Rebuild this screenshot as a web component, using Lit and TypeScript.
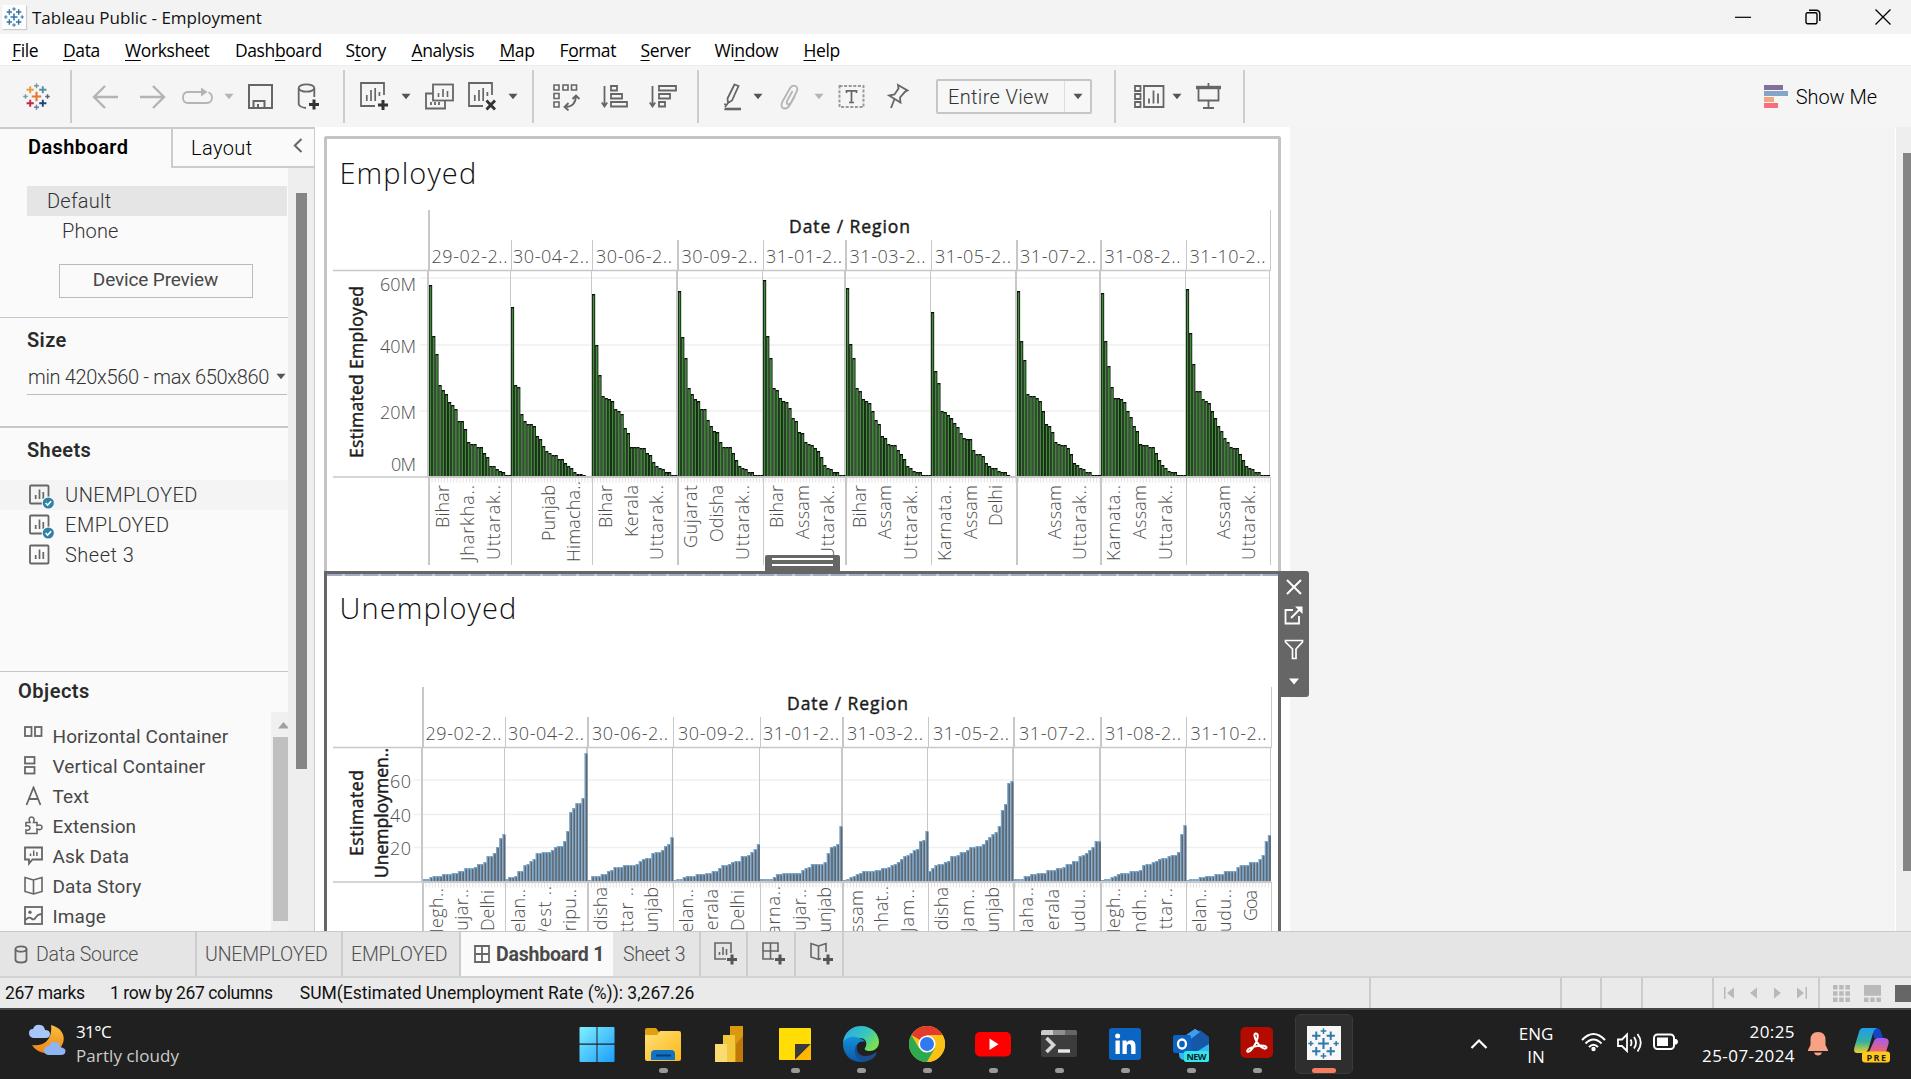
import { LitElement, html, svg, css, nothing } from "lit";
import { customElement, property } from "lit/decorators.js";

/* ---------- small drawing helpers ---------- */

const plus = (x: number, y: number, r: number, c: string, w = 1.6) =>
  svg`<path d="M${x - r} ${y}H${x + r}M${x} ${y - r}V${y + r}" stroke=${c} stroke-width=${w} fill="none"/>`;

const BRAND = ["#e8762c", "#eb9c3c", "#5b8fa0", "#c7234b", "#1f457e", "#7099a6", "#6b7aa8", "#7099a6", "#59617f"];
const BLUE = Array(9).fill("#2f78a8");

const tableauMark = (size: number, c: string[], w = 1.7) => html`
  <svg width=${size} height=${size} viewBox="-12 -12 24 24">
    ${plus(0, 0, 4.2, c[0], w * 1.1)}
    ${plus(-5.6, -6, 3.2, c[1], w)}${plus(5.6, -6, 3.2, c[2], w)}
    ${plus(-5.6, 6, 3.2, c[3], w)}${plus(5.6, 6, 3.2, c[4], w)}
    ${plus(0, -9.6, 2.2, c[5], w * 0.75)}${plus(0, 9.6, 2.2, c[6], w * 0.75)}
    ${plus(-9.8, 0, 2, c[7], w * 0.75)}${plus(9.8, 0, 2, c[8], w * 0.75)}
  </svg>`;

const ico = (w: number, h: number, body: unknown, cls = "") => html`
  <svg class=${cls} width=${w} height=${h} viewBox="0 0 ${w} ${h}" fill="none" stroke="#666" stroke-width="1.8">${body}</svg>`;

const caret = (cls = "", c = "#555") => html`
  <svg class=${cls} width="10" height="7" viewBox="0 0 10 7"><path d="M0.5 0.8H9.5L5 6.2Z" fill=${c}/></svg>`;

const boldPlus = (x: number, y: number) => svg`<path d="M${x - 5} ${y}h10M${x} ${y - 5}v10" stroke="#333" stroke-width="3"/>`;

/* ---------- chart ---------- */

interface Pane { label: string; lx: number; x: number; thick?: boolean; slots: number; tops: string; regions: [string, number, number, number][]; }
interface ChartSpec {
  view: [number, number, number, number]; origin: number; headTop: number; headMid: number; plotTop: number; base: number;
  barBase: number; bottom: number; title: number; titleY: number; dateY: number; left: number; right: number;
  axis: [string, number, number, number][]; grid: number[]; axisTitle: [string, number, number, number][];
  kind: "green" | "blue"; panes: Pane[];
}

const U: [string, number] = ["Uttarak..", 75];
const employed: ChartSpec = {
  view: [327, 207, 951, 364], origin: 125, headTop: 210, headMid: 240, plotTop: 270.5, base: 477, barBase: 476, bottom: 565,
  title: 789, titleY: 232.5, dateY: 263, left: 429, right: 1270.5,
  axis: [["60M", 380, 290.5, 36], ["40M", 380, 352.5, 36], ["20M", 380, 418.5, 36], ["0M", 391, 470.5, 25]],
  grid: [278, 345, 411], axisTitle: [["Estimated Employed", 363, 458, 172]], kind: "green",
  panes: [
    { label: "29-02-2..", lx: 431.5, x: 429, thick: true, slots: 26, tops: "480 633 687 781 795 808 831 840 853 889 889 912 952 958 958 966 966 984 997 1024 1024 1033 1038 1042 1050 1050", regions: [["Bihar", 449, 485, 43], ["Jharkha..", 474, 485, 76], [U[0], 500, 485, U[1]]] },
    { label: "30-04-2..", lx: 513, x: 511.5, slots: 26, tops: "547 781 786 867 889 898 898 903 934 943 962 979 984 989 989 1001 1001 1015 1024 1029 1042 1047 1047 1050", regions: [["Punjab", 555, 485, 56], ["Himacha..", 580, 481, 81]] },
    { label: "30-06-2..", lx: 596, x: 592.5, slots: 27, tops: "507 660 750 813 818 822 827 853 858 867 908 925 966 966 966 970 970 984 989 1011 1024 1029 1033 1042 1042 1050 1050", regions: [["Bihar", 612, 485, 43], ["Kerala", 638, 485, 52], [U[0], 663, 485, U[1]]] },
    { label: "30-09-2..", lx: 681.5, x: 678, thick: true, slots: 27, tops: "498 637 700 790 808 822 827 853 853 885 903 917 921 952 966 966 966 984 1006 1024 1029 1033 1042 1042 1050 1050 1050", regions: [["Gujarat", 697, 485, 63], ["Odisha", 723, 485, 57], [U[0], 749, 485, U[1]]] },
    { label: "31-01-2..", lx: 766, x: 763.5, slots: 26, tops: "466 633 700 790 795 818 827 831 849 880 889 921 925 952 957 961 970 979 997 1020 1029 1033 1042 1042 1050 1050", regions: [["Bihar", 783, 485, 43], ["Assam", 809, 485, 54], [U[0], 834, 485, U[1]]] },
    { label: "31-03-2..", lx: 849.5, x: 846, thick: true, slots: 27, tops: "489 656 700 790 799 822 827 835 858 885 898 934 939 957 961 961 975 988 1002 1024 1029 1038 1042 1042 1050 1050 1050", regions: [["Bihar", 866, 485, 43], ["Assam", 891, 485, 54], [U[0], 917, 485, U[1]]] },
    { label: "31-05-2..", lx: 935, x: 931.5, slots: 27, tops: "561 737 773 858 862 871 880 894 907 925 939 943 943 975 988 988 993 1015 1024 1029 1029 1038 1042 1042 1050", regions: [["Karnata..", 951, 485, 76], ["Assam", 977, 485, 54], ["Delhi", 1002, 485, 41]] },
    { label: "31-07-2..", lx: 1020, x: 1017, thick: true, slots: 27, tops: "498 647 705 808 813 813 818 827 858 898 903 921 952 957 961 961 970 988 1015 1020 1029 1033 1042 1042 1050 1050 1050", regions: [["Assam", 1061, 485, 54], [U[0], 1086, 485, U[1]]] },
    { label: "31-08-2..", lx: 1104.5, x: 1101, thick: true, slots: 27, tops: "503 647 723 786 818 818 822 831 858 876 903 917 957 961 961 966 966 984 1006 1020 1029 1038 1042 1042 1050 1050 1050", regions: [["Karnata..", 1120, 485, 76], ["Assam", 1146, 485, 54], [U[0], 1172, 485, U[1]]] },
    { label: "31-10-2..", lx: 1189.5, x: 1186.5, slots: 27, tops: "493 624 718 799 799 822 827 835 858 880 903 917 939 952 966 970 970 988 1006 1024 1029 1033 1042 1042 1050 1050 1050", regions: [["Assam", 1230, 485, 54], [U[0], 1255, 485, U[1]]] },
  ],
};

const unemployed: ChartSpec = {
  view: [327, 642, 951, 289], origin: 560, headTop: 687, headMid: 717, plotTop: 747.5, base: 882, barBase: 881, bottom: 935,
  title: 787, titleY: 709.5, dateY: 740, left: 423, right: 1271.5,
  axis: [["60", 390, 787.5, 21], ["40", 390, 821.5, 21], ["20", 390, 854.5, 21]],
  grid: [780, 814.5, 847.5], axisTitle: [["Estimated", 363, 856, 86], ["Unemploymen..", 388, 878, 130]], kind: "blue",
  panes: [
    { label: "29-02-2..", lx: 425.5, x: 423, thick: true, slots: 26, tops: "956 956 952 947 947 947 943 943 943 938 938 934 934 925 925 925 921 912 912 907 889 889 880 862 835 822", regions: [["Megh..", 443, 888, 56], ["Gujar..", 468, 889, 55], ["Delhi", 494, 890, 41]] },
    { label: "30-04-2..", lx: 508, x: 505.5, slots: 27, tops: "956 952 952 948 934 934 916 911 903 898 880 880 876 876 876 871 862 858 858 844 813 755 745 728 728 714 578", regions: [["Telan..", 525, 889, 53], ["West ..", 551, 886, 58], ["Tripu..", 576, 889, 52]] },
    { label: "30-06-2..", lx: 592, x: 588, thick: true, slots: 27, tops: "960 947 947 947 943 943 934 929 920 920 920 916 916 916 916 911 903 898 894 894 880 876 876 871 858 853 830", regions: [["Odisha", 607, 887, 57], ["Uttar ..", 633, 887, 60], ["Punjab", 658, 887, 56]] },
    { label: "30-09-2..", lx: 678, x: 673.5, slots: 27, tops: "960 956 956 952 947 947 947 943 943 943 938 938 934 934 925 916 916 911 907 903 903 889 889 884 876 867 853", regions: [["Telan..", 693, 889, 53], ["Kerala", 718, 889, 52], ["Delhi", 744, 890, 41]] },
    { label: "31-01-2..", lx: 763, x: 760.5, slots: 26, tops: "956 956 956 956 952 943 943 938 938 938 938 938 938 929 925 920 912 912 912 912 907 880 862 858 853 799", regions: [["Karna..", 780, 886, 60], ["Gujar..", 806, 889, 55], ["Punjab", 831, 887, 56]] },
    { label: "31-03-2..", lx: 847, x: 843, thick: true, slots: 27, tops: "960 956 950 947 943 938 934 934 934 934 929 929 925 925 920 916 911 907 898 889 884 880 871 867 844 840 812", regions: [["Assam", 863, 890, 54], ["Chhat..", 888, 886, 59], ["Jam..", 914, 889, 43]] },
    { label: "31-05-2..", lx: 933, x: 928.5, slots: 27, tops: "934 925 916 911 911 907 903 889 889 884 876 876 871 862 862 858 858 853 840 830 821 817 799 749 731 668 664", regions: [["Odisha", 948, 887, 57], ["Jam..", 974, 889, 43], ["Punjab", 999, 887, 56]] },
    { label: "31-07-2..", lx: 1019, x: 1014, thick: true, slots: 27, tops: "956 956 956 947 947 943 943 938 938 938 929 929 929 925 925 920 911 911 903 903 889 884 880 871 862 844 844", regions: [["Maha..", 1033, 887, 57], ["Kerala", 1059, 889, 52], ["Pudu..", 1085, 889, 54]] },
    { label: "31-08-2..", lx: 1105, x: 1101, thick: true, slots: 27, tops: "960 956 956 952 947 943 938 938 938 934 934 934 929 916 912 911 907 903 898 894 894 889 885 885 876 821 795", regions: [["Megh..", 1120, 888, 56], ["Andh..", 1146, 889, 55], ["Uttar..", 1172, 888, 55]] },
    { label: "31-10-2..", lx: 1190.5, x: 1186.5, slots: 27, tops: "960 956 956 956 952 952 947 947 947 943 943 943 934 934 934 934 920 916 916 916 907 907 907 898 885 844 825", regions: [["Telan..", 1206, 889, 53], ["Pudu..", 1231, 889, 54], ["Goa", 1257, 890, 31]] },
  ],
};

@customElement("sheet-chart")
class SheetChart extends LitElement {
  @property({ attribute: false }) spec!: ChartSpec;
  static styles = css`
    :host { display: block; }
    svg { display: block; }
    text { font-family: "Open Sans", "Noto Sans", sans-serif; font-size: 18px; font-weight: 300; fill: #4c4c4c; }
    .strong { font-weight: 400; fill: #1c1c1c; stroke: #1c1c1c; stroke-width: 0.45px; font-size: 17.5px; }
    .rule { stroke: #c8c8c8; fill: none; }
    .grid { stroke: #efefef; stroke-width: 1.5; }
  `;
  private pane(p: Pane, next: number) {
    const s = this.spec;
    const x0 = Math.round(p.x - 0.5), pitch = (next - p.x) / p.slots;
    const green = s.kind === "green";
    return p.tops.split(" ").map((t, i) => {
      const y = Math.round(s.origin + Number(t) / 3), a = x0 + i * pitch, h = s.barBase - y;
      return green
        ? svg`<rect x=${a} y=${y} width=${pitch} height=${h} fill="#080c08"/>
              ${h > 2 ? svg`<rect x=${a + 0.7} y=${y + 1.3} width=${pitch - 1.45} height=${h - 1.3} fill="#438a3c"/>` : nothing}`
        : svg`<rect x=${a} y=${y} width=${pitch} height=${h} fill="#76a3ca"/>
              ${h > 2 ? svg`<rect x=${a + 1.35} y=${y + 1.2} width=${pitch - 1.5} height=${h - 1.2} fill="#60666c"/>` : nothing}`;
    });
  }
  render() {
    const s = this.spec, [vx, vy, vw, vh] = s.view;
    const edges = [...s.panes.map((p) => p.x), s.right];
    const ticks: number[] = [];
    for (let x = s.left + 3; x < s.right; x += 3.12) ticks.push(x);
    return html`<svg width=${vw} height=${vh} viewBox="${vx} ${vy} ${vw} ${vh}">
      ${s.grid.map((y) => svg`<path class="grid" d="M${s.left - 9} ${y}H${s.right}"/>`)}
      ${ticks.map((x) => svg`<path d="M${x} ${s.base + 1}v4.5" stroke="#e2e2e2" stroke-width="1"/>`)}
      ${edges.map((x, i) => svg`
        <path class="rule" stroke-width=${i < s.panes.length && s.panes[i].thick ? 2 : 1}
          d="M${x} ${i === 0 || i === edges.length - 1 ? s.headTop : s.headMid}V${s.plotTop}M${x - 1} ${s.plotTop}V${s.base}M${x} ${s.base}V${s.bottom}"/>`)}
      ${s.panes.map((p, i) => this.pane(p, edges[i + 1]))}
      <path class="rule" stroke-width="1.3" d="M333 ${s.plotTop}H${s.right}M333 ${s.base}H${s.left}"/>
      <path class="rule" stroke-width="2" d="M${s.left} ${s.base}H${s.right}"/>
      <text class="strong" x=${s.title} y=${s.titleY} textLength="121">Date / Region</text>
      ${s.panes.map((p) => svg`<text x=${p.lx} y=${s.dateY} textLength="76">${p.label}</text>`)}
      ${s.axis.map(([t, x, y, w]) => svg`<text x=${x} y=${y} textLength=${w}>${t}</text>`)}
      ${s.axisTitle.map(([t, x, y, w]) => svg`<text class="strong" textLength=${w} transform="translate(${x - 0.3} ${y}) rotate(-90)">${t}</text>`)}
      ${s.panes.flatMap((p) => p.regions).map(([t, x, top, w]) => svg`<text textLength=${w} transform="translate(${x - 0.3} ${top + w}) rotate(-90)">${t}</text>`)}
    </svg>`;
  }
}

/* ---------- taskbar ---------- */

const app = (body: unknown) => html`<svg width="36" height="36" viewBox="0 0 36 36">${body}</svg>`;

const APPS: { art: unknown; run?: boolean }[] = [
  { art: app(svg`<defs><linearGradient id="w" x1="0" y1="0" x2="1" y2="1" gradientUnits="objectBoundingBox"><stop offset="0" stop-color="#7ff0ff"/><stop offset="1" stop-color="#1a9dfb"/></linearGradient></defs>
    <path fill="url(#w)" d="M1.5 1H17.5V17.5H.5V2Q.5 1 1.5 1ZM18.5 1H34.5Q35.5 1 35.5 2V17.5H18.5ZM.5 18.8H17.5V36H1.5Q.5 36 .5 35ZM18.5 18.8H35.5V35Q35.5 36 34.5 36H18.5Z"/>`) },
  { run: true, art: app(svg`<path fill="#e0a010" d="M0 4Q0 2 2 2H11L14 6V12H0Z"/><defs><linearGradient id="f" x2="1" y2="1"><stop stop-color="#ffe07a"/><stop offset="1" stop-color="#fbb817"/></linearGradient></defs>
    <path fill="url(#f)" d="M0 9H12L15 5H34Q36 5 36 7V33Q36 35 34 35H2Q0 35 0 33Z"/><path fill="#1272c4" d="M6 34V28Q6 24 10 24H26Q30 24 30 28V34Z"/><path stroke="#0b3f75" stroke-width="2" d="M11 29.5H26"/>`) },
  { art: app(svg`<path fill="#d8990f" d="M19 0H32V36H19Z"/><path fill="#c07808" d="M25 18L32 10V36H25Z"/><path fill="#f2c73a" d="M12 9H24V36H12Z"/><path fill="#f8dc72" d="M4 18H16V36H4Z"/>`) },
  { run: true, art: app(svg`<path fill="#ffdd05" d="M3 2H33Q34 2 34 3V33Q34 34 33 34H3Q2 34 2 33V3Q2 2 3 2Z"/><path fill="#3a3a3a" d="M18 34V18H34Z"/><path fill="#ffb900" d="M18 34L34 18V34Z"/>`) },
  { run: true, art: app(svg`<defs><linearGradient id="e1" x2="1" y2=".6"><stop stop-color="#2aa7e6"/><stop offset=".6" stop-color="#36c6c0"/><stop offset="1" stop-color="#7be04e"/></linearGradient><linearGradient id="e2" y2="1" x2="0"><stop stop-color="#1391dd"/><stop offset="1" stop-color="#0b57a8"/></linearGradient></defs>
    <path fill="url(#e1)" d="M0 17C1 6 9 0 18 0C29 0 36 8 36 16C36 22 31 25 27 25C23 25 21 24 22 22C25 18 23 12 17 12C9 12 3 14 0 17Z"/><path fill="url(#e2)" d="M0 18C1 12 8 10 13 11C18 12 21 14 22 16C16 14 12 19 14 25C16 32 24 34 31 30C28 34 23 36 18 36C7 36 0 28 0 18Z"/><path fill="#1b4c8c" d="M14 18C11 23 16 31 23 30C28 30 31 27 34 26C33 31 28 35 22 35C13 35 9 25 14 18Z"/>`) },
  { run: true, art: app(svg`<circle cx="18" cy="18" r="18" fill="#fbc116"/><path fill="#e33b2e" d="M18 18L2.4 9A18 18 0 0 1 33.6 9H18Z"/><path fill="#2da94f" d="M2.4 9A18 18 0 0 0 18 36L26 22.5L18 18L10.2 22.5Z"/><path fill="#fbc116" d="M33.6 9A18 18 0 0 1 18 36L25.8 22.5L18 9Z"/><circle cx="18" cy="18" r="8.6" fill="#fff"/><circle cx="18" cy="18" r="7" fill="#3079ee"/>`) },
  { run: true, art: app(svg`<rect y="6" width="36" height="24.5" rx="5" fill="#fe0000"/><path fill="#fff" d="M14.5 12.5V24L23.5 18.2Z"/>`) },
  { run: true, art: app(svg`<rect y="4" width="36" height="27" rx="2" fill="#3c3c3c"/><path fill="#ccc" d="M2 4H12V9H0V6Q0 4 2 4Z"/><path fill="#8f8f8f" d="M12 4H24V9H12Z"/><path fill="#666" d="M24 4H34Q36 4 36 6V9H24Z"/><path fill="none" stroke="#d6d6d6" stroke-width="3.6" d="M5.5 12L12.5 19L5.5 26"/><path stroke="#e8e8e8" stroke-width="3.4" d="M17 25H29"/>`) },
  { run: true, art: app(svg`<rect x="2" y="2" width="32" height="32" rx="3" fill="#0a66c2"/><path fill="#fff" d="M8.500 14.500H12.800V28H8.500ZM15.500 14.500H19.600V16.500Q21 14.200 23.800 14.200Q28.500 14.200 28.500 20V28H24.200V21Q24.200 18 22.200 18Q19.800 18 19.800 21V28H15.500Z"/><circle cx="10.650" cy="10" r="2.500" fill="#fff"/>`) },
  { run: true, art: app(svg`<path fill="#2fb8f5" d="M6 14L22 3L36 12V28Q36 34 30 34H12Q6 34 6 28Z"/><path fill="#1757a8" d="M12 14L27 4L36 11V18L20 28Z"/><path fill="#3f9df0" d="M12 10L22 3L27 6L14 16Z"/><rect y="9" width="18" height="18" rx="2" fill="#0c63bf"/><ellipse cx="9" cy="18" rx="4" ry="4.500" fill="none" stroke="#fff" stroke-width="2.300"/><rect x="11" y="25" width="25" height="11" rx="2" fill="#35e5ea"/><text x="13.500" y="34" font-size="9" font-weight="700" font-family="Open Sans, sans-serif" textLength="20" fill="#06262d">NEW</text>`) },
  { run: true, art: app(svg`<rect x="1.500" y="1" width="32.500" height="31" rx="5" fill="#b30b00"/><path fill="none" stroke="#fff" stroke-width="2" d="M16.500 7.500Q19.500 7 18.500 12Q17 19 11 25Q8 27 8.200 24.500Q9.500 21 22 19.500Q28 19.500 27.500 21.800Q26 24 21.500 20.500Q16.500 15.500 15.500 10Q15.200 7.800 16.500 7.500Z"/>`) },
];

/* ---------- page ---------- */

const MENUS: [string, string, string][] = [
  ["", "F", "ile"], ["", "D", "ata"], ["", "W", "orksheet"], ["Dash", "b", "oard"], ["S", "t", "ory"], ["", "A", "nalysis"],
  ["", "M", "ap"], ["F", "o", "rmat"], ["", "S", "erver"], ["Wi", "n", "dow"], ["", "H", "elp"],
];

const sheetIcon = (used: boolean) => ico(25, 25, svg`
  <rect x="1" y="1.500" width="18.500" height="18" rx="1"/><path d="M6.700 15v-4M10.500 15v-9.500M14.300 15v-7" stroke-width="1.700"/>
  ${used ? svg`<circle cx="19.300" cy="19" r="6.600" fill="#fafafa" stroke="none"/><circle cx="19.300" cy="19" r="5.600" fill="#3180a6" stroke="none"/><path d="M16.600 19l2 2 3.500-3.800" stroke="#fff" stroke-width="1.600"/>` : nothing}`);

const OBJECTS: [string, unknown][] = [
  ["Horizontal Container", svg`<rect x="1" y="1" width="6.500" height="9"/><rect x="11" y="1" width="6.500" height="9"/>`],
  ["Vertical Container", svg`<rect x="1" y="1" width="9.500" height="6.500"/><rect x="1" y="11" width="9.500" height="6.500"/>`],
  ["Text", svg`<path d="M2.500 19L9.500 1.500L16.500 19M5 13H14"/>`],
  ["Extension", svg`<path d="M2 8.500V6.500H6C4 3 5.500 1 7.500 1S11 3 9.500 6.500H13V9.500C17 8 18 10 18 11.500S16.500 14.500 13 13V17.500H2V14C5 15 6 13 6 11.800S5 9 2 10Z" stroke-width="1.600"/>`],
  ["Ask Data", svg`<path d="M1 1.500H18V13.500H8.500L5 17.500V13.500H1Z"/><path d="M6.500 10V7.500M9.700 10V4.500M12.900 10V6" stroke-width="1.500"/>`],
  ["Data Story", svg`<path d="M9.500 4L1 1.500V15.500L9.500 18L18 15.500V1.500ZM9.500 4V18" stroke-width="1.600"/>`],
  ["Image", svg`<rect x="1" y="1" width="17" height="17"/><circle cx="6" cy="6.300" r="1.700" fill="#666" stroke="none"/><path d="M1.500 14Q5 10 7.500 12.500T12 11Q14.500 7.500 18 8.500"/>`],
];

@customElement("app-root")
class AppRoot extends LitElement {
  static styles = css`
    :host { display: block; }
    * { box-sizing: border-box; }
    svg { display: block; flex: none; }
    .win { width: 1911px; height: 1079px; display: flex; flex-direction: column; overflow: hidden; background: #f4f4f4; font: 300 20px Roboto, "Liberation Sans", sans-serif; color: #333; white-space: nowrap; }
    .title { height: 34px; background: #f3f3f3; display: flex; align-items: center; font: 400 17px "Open Sans", sans-serif; color: #111; padding-left: 2px; }
    .title .tile { width: 24px; height: 24px; background: #fdfdfd; box-shadow: 1px 1px 1px #ccc; display: grid; place-items: center; margin-right: 6px; }
    .title .wc { display: flex; margin-left: auto; gap: 54px; padding-right: 20px; }
    .menu { height: 32px; background: #fff; display: grid; grid-template-columns: 51px 62px 110px 110.5px 66px 88px 60px 81px 74px 89px 60px; padding-left: 12px; font: 400 17.5px/33px "Open Sans", sans-serif; color: #000; border-bottom: 1px solid #ededed; }
    .menu u { text-underline-offset: 3px; text-decoration-thickness: 1px; }
    .menu span { letter-spacing: -0.4px; }
    .tools { height: 61px; background: #f5f5f5; display: flex; align-items: center; }
    .grp { height: 53px; display: flex; align-items: center; border-right: 2px solid #ccc; }
    .g1 { width: 72px; padding-left: 23px; } .g2 { width: 273px; padding-left: 20px; } .g3 { width: 189px; padding-left: 15px; }
    .g4 { width: 165px; padding-left: 19px; } .g5 { width: 417px; padding-left: 24px; } .g6 { width: 129px; padding-left: 18px; }
    .a { margin-left: 22px; } .b { margin-left: 16px; } .c { margin-left: 11px; } .d { margin-left: 24px; } .e { margin-left: 7px; } .f { margin-left: 14px; } .g { margin-left: 20px; } .h { margin-left: 10px; }
    .combo { margin-left: 27px; width: 156px; height: 35px; border: 2px solid #c6c6c6; border-radius: 2px; display: flex; align-items: center; background: #f7f7f7; }
    .combo span { width: 127px; padding-left: 10px; height: 31px; line-height: 33px; border-right: 1px solid #ddd; letter-spacing: 0.35px; }
    .combo svg { margin-left: 8px; }
    .show { margin-left: auto; display: flex; align-items: center; padding-right: 34px; gap: 8px; color: #000; letter-spacing: -0.05px; }
    .main { height: 804px; display: flex; }
    .side { width: 315px; background: #fafafa; border-right: 1px solid #ccc; display: flex; flex-direction: column; }
    .tabs2 { height: 41px; border-top: 2px solid #ccc; display: flex; }
    .tabs2 b { width: 171px; padding: 0 0 0 28px; line-height: 37px; font-weight: 600; color: #000; letter-spacing: .4px; }
    .tabs2 .lay { flex: 1; border-left: 2px solid #ccc; border-bottom: 2px solid #ccc; display: flex; justify-content: space-between; padding: 1px 11px 0 18px; line-height: 36px; color: #000; letter-spacing: .4px; }
    .tabs2 svg { margin-top: 7px; }
    .cols { flex: 1; display: flex; min-height: 0; }
    .body { width: 288px; display: flex; flex-direction: column; }
    .track { flex: 1; background: #eee; padding: 25px 0 0 8px; }
    .track i { display: block; width: 11px; height: 576px; background: #858585; }
    .def { margin: 18px 1px 0 27px; height: 30px; line-height: 30px; padding-left: 20px; background: #e5e5e5; letter-spacing: .25px; }
    .pho { height: 30px; line-height: 30px; padding-left: 62px; letter-spacing: .15px; }
    .dev { margin: 18px 1px 0 59px; width: 194px; height: 34px; border: 1px solid #bbb; padding-right: 1px; text-align: center; line-height: 30px; font-size: 19px; font-weight: 400; color: #484848; letter-spacing: -.15px; }
    .hr { border-top: 1px solid #c6c6c6; margin-top: 19px; }
    h3 { margin: 7px 0 0; font-size: 20px; font-weight: 600; line-height: 30px; padding-left: 27px; color: #2b2b2b; letter-spacing: .4px; }
    .oh { margin-top: 4px; padding-left: 18px; letter-spacing: .5px; }
    .size { margin: 5px 1px 0 27px; height: 35px; border-bottom: 1px solid #bbb; display: flex; align-items: center; justify-content: space-between; padding: 0 1px 1px 1px; letter-spacing: -0.33px; }
    .hr.two { border-top: 2px solid #c8c8c8; margin-top: 31px; }
    .sheets { margin-top: 15px; height: 172px; }
    .sheets div { height: 30px; display: flex; align-items: center; padding-left: 29px; gap: 11px; line-height: 30px; letter-spacing: .5px; }
    .sheets svg { margin-top: 3px; }
    .sheets .hot { background: #f4f4f4; }
    .obj { flex: 1; display: flex; min-height: 0; overflow: hidden; margin-top: 6px; }
    .obj ul { list-style: none; margin: 0; padding: 9px 0 0 24px; width: 271px; font-size: 19px; font-weight: 400; color: #484848; letter-spacing: .1px; }
    .obj li { height: 30px; line-height: 31px; display: flex; align-items: center; gap: 8.5px; }
    .obj .trk { width: 17px; background: #f0f0f0; display: flex; flex-direction: column; padding-left: 2px; }
    .trk svg { margin: 10px 0 0 5px; } .trk i { background: #c0c0c0; height: 184px; margin-top: 8px; }
    .dash { width: 975px; background: #fff; padding: 9px 9px 0; display: flex; flex-direction: column; }
    .card { position: relative; width: 957px; border: 3px solid #c4c4c4; border-bottom: 0; }
    .one { height: 435px; border-radius: 3px 3px 0 0; }
    .two.card { height: 360px; border-color: #666; background: repeating-linear-gradient(90deg, #a3abc2 0 15px, #ccc 15px 18px) top / 100% 2px no-repeat; }
    .card h2 { margin: 0; height: 68px; padding-left: 12.5px; font: 300 29px/68px "Open Sans", sans-serif; color: #111; letter-spacing: 1.1px; }
    .grip { position: absolute; left: 438px; top: -19px; width: 75px; height: 16px; background: #666; display: flex; flex-direction: column; align-items: center; gap: 4px; padding-top: 3px; border-radius: 2px 2px 0 0; }
    .grip i { width: 61px; height: 2px; background: #fff; }
    .float { position: absolute; left: 951px; top: -3px; width: 31px; height: 126px; background: #666; border-radius: 0 3px 3px 0; display: flex; flex-direction: column; align-items: center; padding-top: 8px; }
    .float .x { margin-bottom: 11px; } .float .y { margin-bottom: 14px; } .float .z { margin-bottom: 18px; }
    .grow { flex: 1; }
    .vs { width: 16px; border-left: 1px solid #fff; background: #eee; padding: 26px 0 0 7px; }
    .vs i { display: block; height: 718px; background: #858585; }
    .sheetbar { height: 47px; background: #e5e5e5; border-top: 1px solid #c8c8c8; border-bottom: 2px solid #d2d2d2; display: flex; font-size: 19.500px; line-height: 44px; color: #505050; }
    .sheetbar > div { border-right: 2px solid #ccc; height: 44px; display: flex; align-items: center; }
    .sheetbar span { padding-top: 1px; }
    .s0 { width: 197px; padding-left: 14px; gap: 8px; letter-spacing: -0.2px; } .s1 { width: 146px; padding-left: 8px; } .s2 { width: 118px; padding-left: 8px; }
    .sheetbar .s3 { width: 152px; background: #fafafa; padding-left: 13px; gap: 6px; font-weight: 700; border: 0; color: #4a4a4a; letter-spacing: -0.2px; }
    .s4 { width: 88px; padding-left: 10px; } .s5 { width: 47px; padding-left: 13px; } .s6 { width: 48px; padding-left: 14px; }
    .s1, .s2 { letter-spacing: -0.2px; }
    .s4 { letter-spacing: -0.3px; }
    .status { height: 30px; background: #eaeaea; display: flex; font-size: 17.500px; line-height: 31px; color: #111; padding-left: 5px; font-weight: 400; }
    .status span:nth-child(1) { width: 105px; letter-spacing: -.3px; } .status span:nth-child(2) { width: 190px; letter-spacing: -.4px; } .status span:nth-child(3) { width: 1070px; }
    .status div { border-left: 2px solid #ccc; display: flex; align-items: center; }
    .q1 { width: 191px; } .q2 { width: 40px; } .q3 { width: 41px; } .q4 { width: 71px; } .q5 { width: 106px; padding-left: 10px; gap: 15px; } .q6 { width: 93px; padding-left: 13px; gap: 14px; }
    .task { height: 71px; background: #202020; border-top: 2px solid #444; display: flex; font-family: "Open Sans", sans-serif; font-weight: 400; font-size: 17px; color: #fff; line-height: 24px; }
    .wx { width: 568px; display: flex; padding: 10px 0 0 29px; gap: 10px; }
    .wx small { display: block; font-size: 17px; color: #ccc; letter-spacing: .1px; }
    .wx .tx { letter-spacing: -.6px; }
    .apps { display: flex; flex: none; gap: 8.05px; padding-top: 4px; width: 786px; }
    .app { flex: none; width: 58px; height: 60px; display: flex; flex-direction: column; align-items: center; padding-top: 12px; border-radius: 5px; }
    .app i { width: 9px; height: 5px; border-radius: 3px; background: #9a9a9a; margin-top: 6px; }
    .app.on { background: #2e2e2e; border: 1px solid #3a3a3a; padding-top: 11px; }
    .app.on i { width: 24px; background: #f47d62; margin-top: 8px; }
    .app .paper { width: 34px; height: 34px; background: #f7f7f7; display: grid; place-items: center; }
    .tray { display: flex; padding-top: 10px; }
    .tray > svg { margin-top: 12px; }
    .tray .up { margin: 18px 0 0 116px; }
    .lang { width: 60px; margin-left: 18px; text-align: center; padding-top: 3px; line-height: 22.5px; }
    .wf { margin-left: 15px; } .sp { margin-left: 10.5px; } .bt { margin-left: 11.5px; }
    .clk { width: 104px; margin-left: 13px; text-align: right; letter-spacing: .42px; }
    .tray .bell { margin: 12px 0 0 13px; } .tray .cop { margin: 7px 0 0 26px; }
  `;

  private tools() {
    const g = "#b4b4b4";
    const ws = svg`<path d="M24 13V1H1V24H15" /><path d="M6.800 19v-6M11 19V8M15.200 19V6M19.400 14v-4" stroke-width="1.700"/>`;
    return html`<div class="tools">
      <div class="grp g1">${tableauMark(27, BRAND)}</div>
      <div class="grp g2">
        ${ico(26, 26, svg`<path stroke=${g} stroke-width="2.400" d="M13 2L2 13L13 24M2 13H26"/>`)}
        ${ico(26, 26, svg`<path stroke=${g} stroke-width="2.400" d="M13 2L24 13L13 24M24 13H0"/>`, "a")}
        ${ico(31, 22, svg`<path stroke=${g} d="M22 6H6Q1 6 1 11.500Q1 17 6 17H24.500Q30 17 30 11.500Q30 7.500 26.500 6.300" /><path d="M19 1.500L25.500 6L19 10.500Z" fill=${g} stroke="none"/>`, "b")}
        ${caret("c", g)}
        ${ico(25, 25, svg`<path d="M1 1H24V24H1ZM5.500 24V17H16.500V24M10 24V20" stroke-width="2"/>`, "f")}
        ${ico(24, 28, svg`<ellipse cx="9.500" cy="5" rx="7.800" ry="3.700"/><path d="M1.700 5V21Q2 24 9 25M17.300 5V14"/>${boldPlus(17, 21.500)}`, "d")}
      </div>
      <div class="grp g3">
        ${ico(30, 29, svg`${ws}${boldPlus(23, 23)}`)}${caret("c")}
        ${ico(29, 27, svg`<rect x="8" y="1.500" width="20" height="16"/><path d="M13.500 14v-4M18 14V6M22.500 14v-6" stroke-width="1.600"/><path d="M8 10.500H1V25.500H20V17M6 22v-3M10 22v-3M14 22v-3" />`, "f")}
        ${ico(30, 29, svg`${ws}<path d="M18.500 18.500L27 27.500M27 18.500L18.500 27.500" stroke="#333" stroke-width="2.800"/>`, "f")}${caret("h")}
      </div>
      <div class="grp g4">
        ${ico(28, 28, svg`<path d="M1 2h5v5H1ZM10 2h5v5h-5ZM18.500 2h5v5h-5ZM1 10.500h5v5H1ZM1 19h5v5H1Z" stroke-width="1.600"/><path d="M12 24Q22.500 24 23 13M15.500 20L11.500 24L15.500 27.500M19.500 16L23 12.500L26.500 16"/>`)}
        ${ico(28, 26, svg`<path d="M3.500 2V22M.800 18.500L3.500 22.500L6.200 18.500" /><path d="M10 2h6v4.500h-6ZM10 10h11v4.500H10ZM10 18h16v4.500H10Z"/>`, "g")}
        ${ico(28, 26, svg`<path d="M3.500 2V22M.800 18.500L3.500 22.500L6.200 18.500" /><path d="M10 2h17v4.500H10ZM10 10h11v4.500H10ZM10 18h6v4.500h-6Z"/>`, "g")}
      </div>
      <div class="grp g5">
        ${ico(19, 28, svg`<path d="M11.500 1.500L15.500 3L9 17.500L5 20L4.500 15.500ZM5 20L2 24M2 20.500v1.500"/><path d="M1.500 26H18" stroke-width="2.600"/>`)}${caret("c")}
        ${ico(21, 26, svg`<path stroke=${g} d="M13.500 7L8 17Q7 20 9.300 20.500Q11 20.500 12.300 18L17.500 8Q19.500 3.500 16.500 2Q13 .500 10.500 5L3.500 17.500Q1 23 4.500 24.300Q8 25.300 10.500 21.500L16 12"/>`, "b")}${caret("f", g)}
        ${ico(27, 26, svg`<rect x="1.500" y="2" width="24" height="21" stroke="#999" stroke-dasharray="3 1.600" stroke-width="1.900"/><path d="M8.500 9V6.800H18.500V9M13.500 6.800V18.500M11 18.500H16" stroke-width="1.700"/>`, "f")}
        ${ico(22, 27, svg`<path d="M11 2L20.500 7.500L18 8.800L13 14.500L13.500 19.500L2 12.500L7.500 11.500L11.500 5.500ZM7.500 16L4 25"/>`, "a")}
        <div class="combo"><span>Entire View</span>${caret()}</div>
      </div>
      <div class="grp g6">
        ${ico(31, 25, svg`<path d="M1 2h5.500v5H1ZM1 10h5.500v5H1ZM1 18h5.500v5H1ZM10 2H29.500V23H10ZM15 19.500v-5M19.500 19.500V6.500M24 19.500v-10"/>`)}${caret("e")}
        ${ico(26, 27, svg`<path d="M0 4.500H25" stroke-width="3.400"/><path d="M2.500 5V17.500H22.500V5M12.500 0V3M12.500 17.500V25M7 25H18"/>`, "f")}
      </div>
      <div class="show">
        <svg width="24" height="26" viewBox="0 0 24 26"><path fill="#84709c" d="M0 1h19v5H0z"/><path fill="#82a5ca" d="M0 7h24v5H0z"/><path fill="#f2a57f" d="M0 13h10v5H0z"/><path fill="#f96c7c" d="M0 19h14v5H0z"/></svg>
        <span>Show Me</span>
      </div>
    </div>`;
  }

  private side() {
    return html`<div class="side">
      <div class="tabs2"><b>Dashboard</b><div class="lay"><span>Layout</span>${ico(10, 18, svg`<path d="M8.500 2L1.800 8.500L8.500 15" stroke-width="2"/>`)}</div></div>
      <div class="cols">
        <div class="body">
          <div class="def">Default</div><div class="pho">Phone</div>
          <div class="dev">Device Preview</div>
          <div class="hr"></div>
          <h3>Size</h3>
          <div class="size"><span>min 420x560 - max 650x860</span>${caret()}</div>
          <div class="hr two"></div>
          <h3>Sheets</h3>
          <div class="sheets">
            <div class="hot">${sheetIcon(true)}UNEMPLOYED</div>
            <div>${sheetIcon(true)}EMPLOYED</div>
            <div>${sheetIcon(false)}Sheet 3</div>
          </div>
          <div class="hr"></div>
          <h3 class="oh">Objects</h3>
          <div class="obj">
            <ul>${OBJECTS.map(([t, i]) => html`<li>${ico(20, 20, i)}${t}</li>`)}</ul>
            <div class="trk"><svg width="12" height="7" viewBox="0 0 12 7"><path d="M0 6.500L5.500 0L11 6.500Z" fill="#a0a0a0"/></svg><i></i></div>
          </div>
        </div>
        <div class="track"><i></i></div>
      </div>
    </div>`;
  }

  private bottom() {
    const win = svg`<path d="M1 1H15V17H1ZM8 1V17M1 9H15"/>`;
    const p = svg`<path d="M13 17.500h10M18 12.500v10" stroke="#555" stroke-width="3"/>`;
    const k = "#b9b9b9";
    return html`<div class="sheetbar">
      <div class="s0">${ico(14, 19, svg`<ellipse cx="7" cy="4" rx="5.500" ry="2.700"/><path d="M1.500 4V15Q2 17.500 7 17.500T12.500 15V4"/>`)}<span>Data Source</span></div>
      <div class="s1"><span>UNEMPLOYED</span></div><div class="s2"><span>EMPLOYED</span></div>
      <div class="s3">${ico(16, 18, win)}<span>Dashboard 1</span></div>
      <div class="s4"><span>Sheet 3</span></div>
      <div class="s5">${ico(24, 24, svg`<path d="M17 11V1H1V17H12M5.500 13v-3M9 13V5M12.500 13V7" stroke-width="1.600"/>${p}`)}</div>
      <div class="s6">${ico(24, 24, svg`<path d="M16 10V1H1V17H12M8.500 1V17M1 9H16" stroke-width="1.600"/>${p}`)}</div>
      <div class="s6">${ico(24, 24, svg`<path d="M8.500 4L1 1.500V15L8.500 17.500L11 16.500M8.500 4V17.500M8.500 4L16 1.500V10" stroke-width="1.600"/>${p}`)}</div>
    </div>
    <div class="status"><span>267 marks</span><span>1 row by 267 columns</span><span>SUM(Estimated Unemployment Rate (%)): 3,267.26</span>
      <div class="q1"></div><div class="q2"></div><div class="q3"></div><div class="q4"></div>
      <div class="q5">
        <svg width="11" height="12" viewBox="0 0 11 12"><path fill=${k} d="M0 0h1.500v12H0zM10 .500V11.500L3 6Z"/></svg>
        <svg width="8" height="12" viewBox="0 0 8 12"><path fill=${k} d="M7 .500V11.500L0 6Z"/></svg>
        <svg width="8" height="12" viewBox="0 0 8 12"><path fill=${k} d="M1 .500V11.500L8 6Z"/></svg>
        <svg width="11" height="12" viewBox="0 0 11 12"><path fill=${k} d="M9.500 0H11v12H9.500zM1 .500V11.500L8 6Z"/></svg>
      </div>
      <div class="q6">
        <svg width="17" height="17" viewBox="0 0 17 17"><path fill=${k} d="M0 0h4.500v4.500H0zM6.200 0h4.500v4.500H6.200zM12.400 0h4.500v4.500h-4.500zM0 6.200h4.500v4.500H0zM6.200 6.200h4.500v4.500H6.200zM12.400 6.200h4.500v4.500h-4.500zM0 12.400h4.500v4.500H0zM6.200 12.400h4.500v4.500H6.200zM12.400 12.400h4.500v4.500h-4.500z"/></svg>
        <svg width="17" height="17" viewBox="0 0 17 17"><path fill=${k} d="M0 0h17v10.700H0zM0 12.400h4.500v4.500H0zM6.200 12.400h4.500v4.500H6.200zM12.400 12.400h4.500v4.500h-4.500z"/></svg>
        <svg width="17" height="17" viewBox="0 0 17 17"><path fill="#666" d="M0 0h17v17H0z"/></svg>
      </div>
    </div>`;
  }

  private task() {
    return html`<div class="task">
      <div class="wx">
        <svg width="37" height="36" viewBox="0 0 37 36"><defs><linearGradient id="m" x2="0" y2="1"><stop stop-color="#f7c23e"/><stop offset="1" stop-color="#ee8417"/></linearGradient></defs>
          <path fill="url(#m)" d="M22 5C34 8 38 18 32 27C26 35 10 36 3 25C14 27 24 20 22 5Z"/>
          <path fill="#a9c6f8" d="M4 18Q0 17 0 13T4 9Q6 4 11 5Q15 5 16 10Q21 10 21 14T17 18Z"/>
          <path fill="#8fb4f2" d="M19 35Q14.500 34 15 30T20 26Q22 21 27 22Q31 23 31 27Q37 28 36.500 31.500T32 35Z"/></svg>
        <div class="tx">31°C<small>Partly cloudy</small></div>
      </div>
      <div class="apps">
        ${APPS.map((a) => html`<div class="app">${a.art}${a.run ? html`<i></i>` : nothing}</div>`)}
        <div class="app on"><div class="paper">${tableauMark(31, BLUE, 1.5)}</div><i></i></div>
      </div>
      <div class="tray">
        <svg class="up" width="18" height="12" viewBox="0 0 18 12"><path d="M1.500 10L9 2.500L16.500 10" fill="none" stroke="#fff" stroke-width="2.200"/></svg>
        <div class="lang">ENG<br />IN</div>
        <svg class="wf" width="25" height="20" viewBox="0 0 25 20" fill="none" stroke="#fff" stroke-width="2"><path d="M1 8Q12.500 -4 24 8M4.500 11.500Q12.500 3.500 20.500 11.500M8 15Q12.500 10.500 17 15"/><circle cx="12.500" cy="17" r="2.200" fill="#fff" stroke="none"/></svg>
        <svg class="sp" width="25" height="22" viewBox="0 0 25 22" fill="none" stroke="#fff" stroke-width="1.800"><path d="M1 7.500H5L10 2.500V19L5 14H1ZM13.500 7.500Q15.500 10.700 13.500 14M17 5Q21 10.700 17 16.500M20.500 2Q27 10.700 20.500 19.500"/></svg>
        <svg class="bt" width="25" height="20" viewBox="0 0 25 20"><rect x="1" y="2.500" width="20" height="14.500" rx="3.500" fill="none" stroke="#fff" stroke-width="2"/><rect x="4" y="5.500" width="11" height="8.500" fill="#fff"/><path fill="#fff" d="M22 7h1.500Q25 8 25 9.700T23.500 12.500H22z"/></svg>
        <div class="clk">20:25<br />25-07-2024</div>
        <svg class="bell" width="20" height="24" viewBox="0 0 20 24"><path fill="#f9a184" d="M10 0Q17.500 0 17.500 8V13L20 18V19H0V18L2.500 13V8Q2.500 0 10 0ZM6 20.500H14Q13 23.500 10 23.500T6 20.500Z"/></svg>
        <svg class="cop" width="37" height="37" viewBox="0 0 37 37"><defs><linearGradient id="c1" x2="0" y2="1"><stop stop-color="#1f9cf0"/><stop offset=".55" stop-color="#35b0a0"/><stop offset="1" stop-color="#f0d020"/></linearGradient><linearGradient id="c2" x2="0" y2="1"><stop stop-color="#a35df0"/><stop offset="1" stop-color="#f0646c"/></linearGradient></defs>
          <path fill="#1544c8" d="M18 1H22Q26 1 27 5L29 11H20Z"/><path fill="url(#c2)" d="M24 11H30Q36 11 34.500 17L32 25H15L20 14Q21 11 24 11Z"/><path fill="url(#c1)" d="M9 1H23Q20 2 19 6L15 20Q13.500 26 8 26H3Q-1 26 .500 20L5 5Q6 1 9 1Z"/>
          <rect x="8" y="24.500" width="28" height="11" rx="3" fill="#ffc91a"/><text x="12.500" y="33.700" font-family="Open Sans, sans-serif" font-size="9" font-weight="700" fill="#222" textLength="19.500">PRE</text></svg>
      </div>
    </div>`;
  }

  render() {
    return html`<div class="win">
      <div class="title"><div class="tile">${tableauMark(20, BLUE, 1.7)}</div>Tableau Public - Employment
        <div class="wc">
          ${ico(16, 16, svg`<path d="M0 8.300H16" stroke="#000" stroke-width="1.200"/>`)}
          ${ico(16, 16, svg`<rect x="1" y="3.800" width="11" height="11" rx="1.500" stroke="#000" stroke-width="1.400"/><path d="M4 1.200H11Q14.800 1.200 14.800 5V12" stroke="#000" stroke-width="1.400"/>`)}
          ${ico(16, 16, svg`<path d="M.500.500L15.500 15.500M15.500.500L.500 15.500" stroke="#000" stroke-width="1.300"/>`)}
        </div>
      </div>
      <div class="menu">${MENUS.map(([a, k, b]) => html`<span>${a}<u>${k}</u>${b}</span>`)}</div>
      ${this.tools()}
      <div class="main">
        ${this.side()}
        <div class="dash">
          <div class="card one"><h2>Employed</h2><sheet-chart .spec=${employed}></sheet-chart></div>
          <div class="card two"><h2>Unemployed</h2><sheet-chart .spec=${unemployed}></sheet-chart>
            <div class="grip"><i></i><i></i></div>
            <div class="float">
              <svg class="x" width="16" height="16" viewBox="0 0 16 16"><path d="M1 1L15 15M15 1L1 15" stroke="#fff" stroke-width="2"/></svg>
              <svg class="y" width="19" height="19" viewBox="0 0 19 19"><path d="M9 4H1.500V17.500H15V10M7 12L15 4" fill="none" stroke="#fff" stroke-width="1.800"/><path fill="#fff" d="M11 .500H18.500V8Z"/></svg>
              <svg class="z" width="20" height="21" viewBox="0 0 20 21"><path d="M1.500 1.500H18.500V3L12 10V19.500H8.500V10L1.500 3Z" fill="none" stroke="#fff" stroke-width="1.700"/></svg>
              <svg width="10" height="7" viewBox="0 0 10 7"><path fill="#fff" d="M0 .500H10L5 6.500Z"/></svg>
            </div>
          </div>
        </div>
        <div class="grow"></div>
        <div class="vs"><i></i></div>
      </div>
      ${this.bottom()}
      ${this.task()}
    </div>`;
  }
}
